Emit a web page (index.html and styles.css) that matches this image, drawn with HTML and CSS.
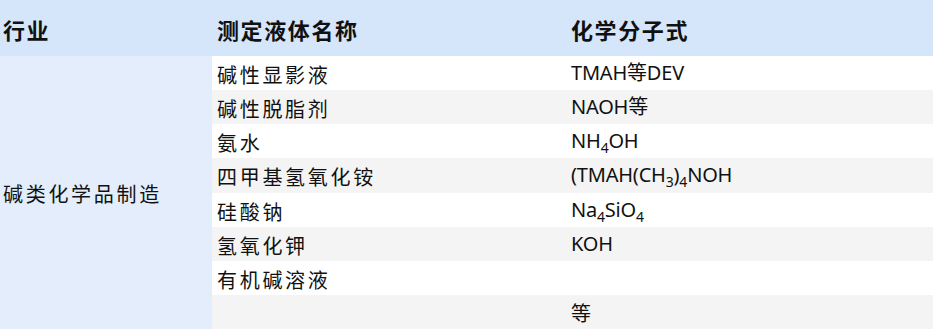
FILE: index.html
```html
<!DOCTYPE html>
<html lang="zh-CN">
<head>
<meta charset="utf-8">
<title>碱类化学品制造</title>
<link rel="stylesheet" href="styles.css">
</head>
<body>
<div class="table">
  <div class="hd c1">行业</div>
  <div class="hd c2">测定液体名称</div>
  <div class="hd c3">化学分子式</div>

  <div class="industry">碱类化学品制造</div>

  <div class="cell c2 odd">碱性显影液</div>
  <div class="cell c3 odd formula"><span>TMAH等DEV</span></div>

  <div class="cell c2 even">碱性脱脂剂</div>
  <div class="cell c3 even formula"><span>NAOH等</span></div>

  <div class="cell c2 odd">氨水</div>
  <div class="cell c3 odd formula"><span>NH<sub>4</sub>OH</span></div>

  <div class="cell c2 even">四甲基氢氧化铵</div>
  <div class="cell c3 even formula"><span>(TMAH(CH<sub>3</sub>)<sub>4</sub>NOH</span></div>

  <div class="cell c2 odd">硅酸钠</div>
  <div class="cell c3 odd formula"><span>Na<sub>4</sub>SiO<sub>4</sub></span></div>

  <div class="cell c2 even">氢氧化钾</div>
  <div class="cell c3 even formula"><span>KOH</span></div>

  <div class="cell c2 odd">有机碱溶液</div>
  <div class="cell c3 odd formula"></div>

  <div class="cell c2 even"></div>
  <div class="cell c3 even formula"><span class="deng">等</span></div>
</div>
</body>
</html>
```

FILE: styles.css
```css
html, body {
  margin: 0;
  padding: 0;
  background: #ffffff;
}

.table {
  width: 933px;
  height: 329px;
  display: grid;
  grid-template-columns: 212px 354px 1fr;
  grid-template-rows: 56px repeat(8, 1fr);
  color: #111111;
  font-family: "Liberation Serif", "Noto Sans CJK SC", serif;
}

.hd {
  background: #d5e5fa;
  display: flex;
  align-items: center;
  padding-top: 2px;
  font-size: 22px;
  font-weight: 700;
  letter-spacing: 1.6px;
  box-sizing: border-box;
}

.c1 {
  padding-left: 3px;
}

.c2 {
  padding-left: 5px;
}

.c3 {
  padding-left: 5px;
}

.industry {
  grid-column: 1;
  grid-row: 2 / span 8;
  background: #e3edfb;
  display: flex;
  align-items: center;
  padding-left: 3px;
  padding-top: 2px;
  font-size: 20px;
  letter-spacing: 2.7px;
}

.cell {
  display: flex;
  align-items: center;
  box-sizing: border-box;
  font-size: 20px;
  letter-spacing: 2.7px;
  padding-top: 3px;
  white-space: nowrap;
}

.cell.odd {
  background: #ffffff;
}

.cell.even {
  background: #f4f4f4;
}

.formula {
  font-family: "Noto Sans", "Noto Sans CJK SC", sans-serif;
  font-size: 20px;
  letter-spacing: -0.2px;
  padding-top: 0;
}

.formula span {
  line-height: 24px;
}

.formula sub {
  font-size: 14px;
  vertical-align: -5px;
  line-height: 0;
}

.formula .deng {
  padding-top: 4px;
}
```
